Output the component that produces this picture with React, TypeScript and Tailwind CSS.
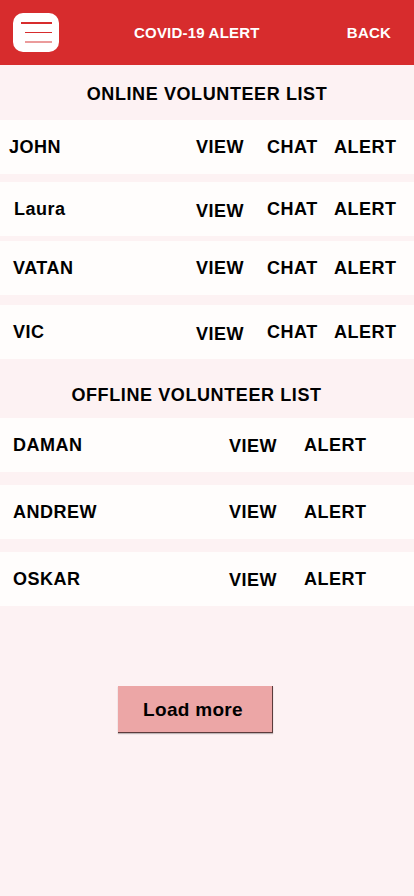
import React from "react";

const online = [
  { name: "JOHN", pl: "pl-[9px]", gap: "mt-0", view: "pt-0" },
  { name: "Laura", pl: "pl-[14px]", gap: "mt-[8px]", view: "pt-[4px]" },
  { name: "VATAN", pl: "pl-[13px]", gap: "mt-[5px]", view: "pt-0" },
  { name: "VIC", pl: "pl-[13px]", gap: "mt-[10px]", view: "pt-[4px]" },
];

const offline = [
  { name: "DAMAN", gap: "mt-0", view: "pt-[2px]" },
  { name: "ANDREW", gap: "mt-[13px]", view: "pt-0" },
  { name: "OSKAR", gap: "mt-[13px]", view: "pt-[3px]" },
];

const App = () => {
  return (
    <div
      className="min-h-[896px] w-full bg-[#fdf2f3] text-black"
      style={{ fontFamily: '"Liberation Sans", Arial, sans-serif' }}
    >
      {/* header */}
      <div className="flex h-[65px] items-center bg-[#d72c2d] px-[13px]">
        <button className="flex h-[39px] w-[46px] flex-col items-center justify-center gap-[8px] rounded-[10px] bg-white">
          <span className="block h-[1.5px] w-[31px] bg-[#d72c2d]" />
          <span className="ml-[4px] block h-[1.5px] w-[27px] bg-[#d72c2d]" />
          <span className="ml-[4px] block h-[2px] w-[27px] bg-[#eb9b9b]" />
        </button>
        <div className="ml-[75px] flex-1 pt-[2px] text-[15px] font-bold tracking-[0.2px] text-white">COVID-19 ALERT</div>
        <div className="pr-[10px] pt-[2px] text-[15px] font-bold tracking-[0.2px] text-white">BACK</div>
      </div>

      {/* online */}
      <div className="flex h-[55px] items-center justify-center pt-[4px] text-[18px] font-bold tracking-[0.6px]">
        ONLINE VOLUNTEER LIST
      </div>
      {online.map((v) => (
        <div key={v.name} className={`flex h-[54px] items-center bg-[#fffdfc] text-[18px] font-bold tracking-[0.5px] ${v.gap}`}>
          <div className={`flex-1 ${v.pl}`}>{v.name}</div>
          <div className={`w-[71px] ${v.view}`}>VIEW</div>
          <div className="w-[67px]">CHAT</div>
          <div className="w-[80px]">ALERT</div>
        </div>
      ))}

      {/* offline */}
      <div className="flex h-[59px] items-center justify-center pr-[21px] pt-[14px] text-[18px] font-bold tracking-[0.6px]">
        OFFLINE VOLUNTEER LIST
      </div>
      {offline.map((v) => (
        <div key={v.name} className={`flex h-[54px] items-center bg-[#fffdfc] text-[18px] font-bold tracking-[0.5px] ${v.gap}`}>
          <div className="flex-1 pl-[13px]">{v.name}</div>
          <div className={`w-[75px] ${v.view}`}>VIEW</div>
          <div className="w-[110px]">ALERT</div>
        </div>
      ))}

      <div className="flex pl-[118px] pt-[80px]">
        <button className="h-[47px] w-[155px] border-b-[1.5px] border-r border-[#5b3b3b] bg-[#eca6a6] pr-[4px] pt-[2px] text-[19px] font-bold tracking-[0.3px] shadow-[0_1px_1px_rgba(0,0,0,0.25)]">
          Load more
        </button>
      </div>
    </div>
  );
};

export default App;
